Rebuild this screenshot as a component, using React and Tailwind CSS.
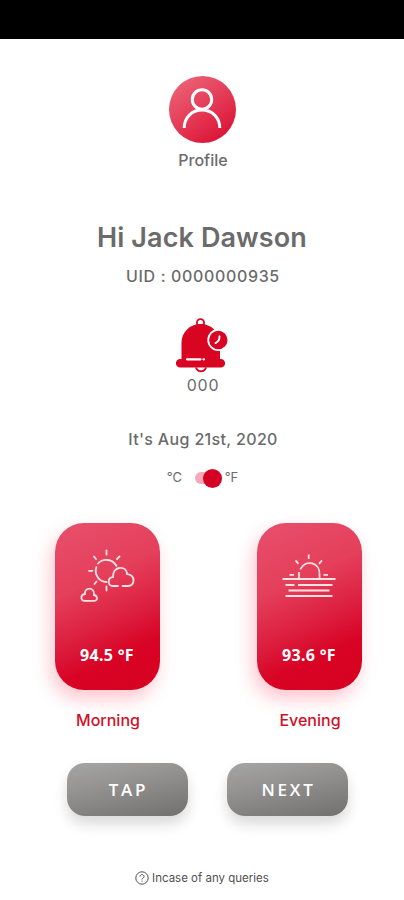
const readings = [
  { label: 'Morning', value: '94.5 °F', icon: MorningIcon },
  { label: 'Evening', value: '93.6 °F', icon: EveningIcon },
];

function ProfileIcon() {
  return (
    <svg width="40" height="42" viewBox="0 0 40 42" fill="none" stroke="#fff" strokeWidth="3">
      <circle cx="20" cy="11.5" r="9.7" />
      <path d="M2.2 40C2.2 29.5 10 22 20 22S37.8 29.5 37.8 40" />
    </svg>
  );
}

function BellIcon() {
  return (
    <svg width="52" height="55" viewBox="0 0 52 55" fill="none">
      <circle cx="24.5" cy="4.8" r="3.6" stroke="#d90322" strokeWidth="1.8" />
      <path d="M20 49.5a5.2 5.2 0 0 0 10 0" stroke="#d90322" strokeWidth="1.8" />
      <path d="M5.5 41V25C5.5 14 14 6 24.5 6S44 14 44 25v16h.8a4.2 4.2 0 0 1 0 8.6H4.2a4.2 4.2 0 0 1 0-8.6z" fill="#d90322" />
      <circle cx="42.3" cy="22" r="11" fill="#fff" />
      <circle cx="42.3" cy="22" r="9.2" fill="#d90322" />
      <path d="M43.5 18.3q.2 4.8-4 6.8" stroke="#fff" strokeWidth="1.9" strokeLinecap="round" />
      <path d="M11 41.3h13.5M27.5 41.3h.5" stroke="#fff" strokeWidth="2.2" strokeLinecap="round" />
    </svg>
  );
}

function MorningIcon() {
  return (
    <svg width="56" height="54" viewBox="0 0 56 54" fill="none" stroke="#ffe3e3" strokeWidth="1.8" strokeLinecap="round">
      <path d="M27.5 1.5v4M15 7.5l2 2.5M40.5 7.5l-2.5 2.5M10 21.8h3.5M15.5 35l2-2.5M27.5 37.5v4" />
      <path d="M37.5 17A11.5 11.5 0 0 0 19 14.5M17.4 18C15 25.5 20 33 27.5 33" />
      <path d="M39 37h-5.3c-5.2 0-5.7-8.5.3-8.9-.1-4.5 1.8-9.3 7.5-9.3 4 0 6.4 2.9 6.6 6.3 4.1.5 6.4 2.5 6.4 6.2 0 3.8-2.6 5.7-5.7 5.7h-5.3" />
      <path d="M5.5 51.8h10c3.4 0 3.4-5-.5-5.8.7-4.2-2.2-6.4-4.5-6.3-3 0-5 2.4-4.5 5.3C1.2 45.6 1.3 51.8 5.5 51.8z" />
    </svg>
  );
}

function EveningIcon() {
  return (
    <svg width="54" height="46" viewBox="0 0 54 46" fill="none" stroke="#ffe3e3" strokeWidth="1.8">
      <path d="M26.7 1.5v4.5M13.5 7.3l3 3.5M40 7.3l-3 3.5M7.5 21.8h4.5M41.5 21.8h4.5" />
      <path d="M17 26v-7M18.3 16.3c5.5-10.8 20.1-6.5 19.2 5.2V26" />
      <path d="M.5 26h53M3.5 32h9M16 32h34.5M6.5 37.5h41M3.5 43h47" />
    </svg>
  );
}

function ReadingCard({ label, value, icon: Icon }) {
  return (
    <div className="w-[105px] flex flex-col items-center">
      <div className="w-[105px] h-[167px] rounded-[29px] flex flex-col items-center bg-linear-[155deg,#e8506b_0%,#e43f5b_35%,#dd1f40_58%,#d80425_75%,#d8001f_100%] shadow-[-4px_9px_18px_rgba(255,35,70,0.26)]">
        <div className="h-[54px] mt-[26px] flex items-center">
          <Icon />
        </div>
        <span className="mt-[42px] text-[16px] leading-[20px] font-bold tracking-[0.3px] text-white font-['Noto_Sans',sans-serif]">
          {value}
        </span>
      </div>
      <span className="mt-[20px] ml-[2px] text-[16px] leading-5 font-medium text-[#cf1028]">{label}</span>
    </div>
  );
}

function ActionButton({ children }) {
  return (
    <button className="w-[121px] h-[53px] rounded-[18px] pl-[2px] text-[17px] font-semibold tracking-[2.8px] text-white font-['Open_Sans',sans-serif] bg-linear-[168deg,#a6a6a6_0%,#918f8e_45%,#72706e_100%] shadow-[0_8px_14px_rgba(0,0,0,0.15)]">
      {children}
    </button>
  );
}

export default function App() {
  return (
    <div className="w-[404px] h-[900px] overflow-hidden bg-white flex flex-col items-center text-[#6b6b6b] font-['Inter',sans-serif]">
      <div className="w-full h-[39px] shrink-0 bg-black" />

      <div className="mt-[37px] size-[67px] rounded-full flex items-center justify-center pb-[2px] bg-linear-[145deg,#ef6b7c_0%,#e5405b_45%,#d9082b_100%]">
        <ProfileIcon />
      </div>
      <span className="mt-[7px] ml-[2px] text-[16px] leading-5 font-medium">Profile</span>

      <h1 className="mt-[50px] text-[27px] leading-[36px] font-semibold tracking-[0.1px]">Hi Jack Dawson</h1>
      <p className="mt-[10px] ml-[2px] text-[16px] leading-5 font-medium tracking-[0.65px]">UID : 0000000935</p>

      <div className="mt-[32px] ml-[-1px]">
        <BellIcon />
      </div>
      <span className="mt-[2px] ml-[2px] text-[16px] leading-5 tracking-[0.7px]">000</span>

      <p className="mt-[34px] ml-[2px] text-[16px] leading-5 font-medium tracking-[0.35px]">It's Aug 21st, 2020</p>
      <div className="mt-[19px] ml-[1px] h-[20px] flex items-center text-[13px] tracking-[-0.1px]">
        <span className="w-[16px]">°C</span>
        <div className="ml-[12px] w-[27px] h-[12px] rounded-full bg-[#f7a8b8] flex items-center justify-end">
          <span className="size-[19px] shrink-0 rounded-full bg-[#d50023]" />
        </div>
        <span className="ml-[3px]">°F</span>
      </div>

      <div className="mt-[35px] ml-[12px] flex gap-[97px]">
        {readings.map((reading) => (
          <ReadingCard key={reading.label} {...reading} />
        ))}
      </div>

      <div className="mt-[33px] ml-[11px] flex gap-[39px]">
        <ActionButton>TAP</ActionButton>
        <ActionButton>NEXT</ActionButton>
      </div>

      <div className="mt-[53px] flex items-center gap-[3px] text-[11.5px] leading-[18px] text-[#505050]">
        <svg width="14" height="14" viewBox="0 0 14 14" fill="none" stroke="#505050">
          <circle cx="7" cy="7" r="6.2" />
          <path d="M5 5.5c.1-2.5 4-2.5 4 0 0 1.5-2 1.5-2 3M7 9.6v1" />
        </svg>
        <span>Incase of any queries</span>
      </div>
    </div>
  );
}
